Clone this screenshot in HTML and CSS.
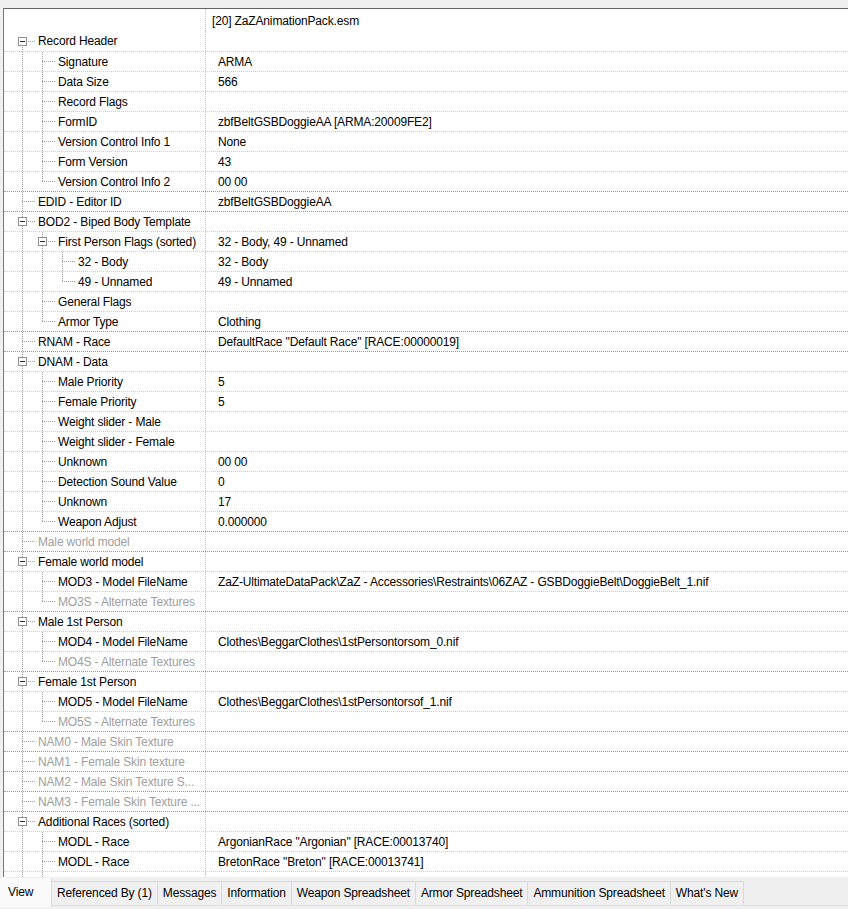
FILE: index.html
```html
<!DOCTYPE html>
<html>
<head>
<meta charset="utf-8">
<title>Record View</title>
<link rel="stylesheet" href="styles.css">
</head>
<body>
<div class="frame">
  <div class="head"><div class="name"></div><div class="val">[20] ZaZAnimationPack.esm</div></div>

  <div class="row first"><div class="name"><span class="g own start"><span class="box"></span></span><span class="label">Record Header</span></div><div class="val"></div></div>
  <div class="row"><div class="name"><span class="g pipe"></span><span class="g own tee"></span><span class="label">Signature</span></div><div class="val">ARMA</div></div>
  <div class="row"><div class="name"><span class="g pipe"></span><span class="g own tee"></span><span class="label">Data Size</span></div><div class="val">566</div></div>
  <div class="row"><div class="name"><span class="g pipe"></span><span class="g own tee"></span><span class="label">Record Flags</span></div><div class="val"></div></div>
  <div class="row"><div class="name"><span class="g pipe"></span><span class="g own tee"></span><span class="label">FormID</span></div><div class="val">zbfBeltGSBDoggieAA [ARMA:20009FE2]</div></div>
  <div class="row"><div class="name"><span class="g pipe"></span><span class="g own tee"></span><span class="label">Version Control Info 1</span></div><div class="val">None</div></div>
  <div class="row"><div class="name"><span class="g pipe"></span><span class="g own tee"></span><span class="label">Form Version</span></div><div class="val">43</div></div>
  <div class="row"><div class="name"><span class="g pipe"></span><span class="g own ell"></span><span class="label">Version Control Info 2</span></div><div class="val">00 00</div></div>

  <div class="row top"><div class="name"><span class="g own tee"></span><span class="label">EDID - Editor ID</span></div><div class="val">zbfBeltGSBDoggieAA</div></div>

  <div class="row top"><div class="name"><span class="g own tee"><span class="box"></span></span><span class="label">BOD2 - Biped Body Template</span></div><div class="val"></div></div>
  <div class="row"><div class="name"><span class="g pipe"></span><span class="g own tee"><span class="box"></span></span><span class="label">First Person Flags (sorted)</span></div><div class="val">32 - Body, 49 - Unnamed</div></div>
  <div class="row"><div class="name"><span class="g pipe"></span><span class="g pipe"></span><span class="g own tee"></span><span class="label">32 - Body</span></div><div class="val">32 - Body</div></div>
  <div class="row"><div class="name"><span class="g pipe"></span><span class="g pipe"></span><span class="g own ell"></span><span class="label">49 - Unnamed</span></div><div class="val">49 - Unnamed</div></div>
  <div class="row"><div class="name"><span class="g pipe"></span><span class="g own tee"></span><span class="label">General Flags</span></div><div class="val"></div></div>
  <div class="row"><div class="name"><span class="g pipe"></span><span class="g own ell"></span><span class="label">Armor Type</span></div><div class="val">Clothing</div></div>

  <div class="row top"><div class="name"><span class="g own tee"></span><span class="label">RNAM - Race</span></div><div class="val">DefaultRace "Default Race" [RACE:00000019]</div></div>

  <div class="row top"><div class="name"><span class="g own tee"><span class="box"></span></span><span class="label">DNAM - Data</span></div><div class="val"></div></div>
  <div class="row"><div class="name"><span class="g pipe"></span><span class="g own tee"></span><span class="label">Male Priority</span></div><div class="val">5</div></div>
  <div class="row"><div class="name"><span class="g pipe"></span><span class="g own tee"></span><span class="label">Female Priority</span></div><div class="val">5</div></div>
  <div class="row"><div class="name"><span class="g pipe"></span><span class="g own tee"></span><span class="label">Weight slider - Male</span></div><div class="val"></div></div>
  <div class="row"><div class="name"><span class="g pipe"></span><span class="g own tee"></span><span class="label">Weight slider - Female</span></div><div class="val"></div></div>
  <div class="row"><div class="name"><span class="g pipe"></span><span class="g own tee"></span><span class="label">Unknown</span></div><div class="val">00 00</div></div>
  <div class="row"><div class="name"><span class="g pipe"></span><span class="g own tee"></span><span class="label">Detection Sound Value</span></div><div class="val">0</div></div>
  <div class="row"><div class="name"><span class="g pipe"></span><span class="g own tee"></span><span class="label">Unknown</span></div><div class="val">17</div></div>
  <div class="row"><div class="name"><span class="g pipe"></span><span class="g own ell"></span><span class="label">Weapon Adjust</span></div><div class="val">0.000000</div></div>

  <div class="row top off"><div class="name"><span class="g own tee"></span><span class="label">Male world model</span></div><div class="val"></div></div>

  <div class="row top"><div class="name"><span class="g own tee"><span class="box"></span></span><span class="label">Female world model</span></div><div class="val"></div></div>
  <div class="row"><div class="name"><span class="g pipe"></span><span class="g own tee"></span><span class="label">MOD3 - Model FileName</span></div><div class="val">ZaZ-UltimateDataPack\ZaZ - Accessories\Restraints\06ZAZ - GSBDoggieBelt\DoggieBelt_1.nif</div></div>
  <div class="row off"><div class="name"><span class="g pipe"></span><span class="g own ell"></span><span class="label">MO3S - Alternate Textures</span></div><div class="val"></div></div>

  <div class="row top"><div class="name"><span class="g own tee"><span class="box"></span></span><span class="label">Male 1st Person</span></div><div class="val"></div></div>
  <div class="row"><div class="name"><span class="g pipe"></span><span class="g own tee"></span><span class="label">MOD4 - Model FileName</span></div><div class="val">Clothes\BeggarClothes\1stPersontorsom_0.nif</div></div>
  <div class="row off"><div class="name"><span class="g pipe"></span><span class="g own ell"></span><span class="label">MO4S - Alternate Textures</span></div><div class="val"></div></div>

  <div class="row top"><div class="name"><span class="g own tee"><span class="box"></span></span><span class="label">Female 1st Person</span></div><div class="val"></div></div>
  <div class="row"><div class="name"><span class="g pipe"></span><span class="g own tee"></span><span class="label">MOD5 - Model FileName</span></div><div class="val">Clothes\BeggarClothes\1stPersontorsof_1.nif</div></div>
  <div class="row off"><div class="name"><span class="g pipe"></span><span class="g own ell"></span><span class="label">MO5S - Alternate Textures</span></div><div class="val"></div></div>

  <div class="row top off"><div class="name"><span class="g own tee"></span><span class="label">NAM0 - Male Skin Texture</span></div><div class="val"></div></div>
  <div class="row top off"><div class="name"><span class="g own tee"></span><span class="label">NAM1 - Female Skin texture</span></div><div class="val"></div></div>
  <div class="row top off"><div class="name"><span class="g own tee"></span><span class="label">NAM2 - Male Skin Texture S...</span></div><div class="val"></div></div>
  <div class="row top off"><div class="name"><span class="g own tee"></span><span class="label">NAM3 - Female Skin Texture ...</span></div><div class="val"></div></div>

  <div class="row top"><div class="name"><span class="g own tee"><span class="box"></span></span><span class="label">Additional Races (sorted)</span></div><div class="val"></div></div>
  <div class="row"><div class="name"><span class="g pipe"></span><span class="g own tee"></span><span class="label">MODL - Race</span></div><div class="val">ArgonianRace "Argonian" [RACE:00013740]</div></div>
  <div class="row"><div class="name"><span class="g pipe"></span><span class="g own tee"></span><span class="label">MODL - Race</span></div><div class="val">BretonRace "Breton" [RACE:00013741]</div></div>
  <div class="row"><div class="name"><span class="g pipe"></span><span class="g own tee"></span><span class="label"></span></div><div class="val"></div></div>
</div>

<div class="tabbar">
  <div class="tabs">
    <div class="tab sel">View</div>
    <div class="tab">Referenced By (1)</div>
    <div class="tab">Messages</div>
    <div class="tab">Information</div>
    <div class="tab">Weapon Spreadsheet</div>
    <div class="tab">Armor Spreadsheet</div>
    <div class="tab">Ammunition Spreadsheet</div>
    <div class="tab">What's New</div>
  </div>
</div>
</body>
</html>
```
FILE: styles.css
```css
html, body {
  margin: 0;
  padding: 0;
}

body {
  width: 848px;
  height: 909px;
  overflow: hidden;
  background: #f0f0f0;
  font-family: "Liberation Sans", Arial, sans-serif;
  font-size: 12px;
  letter-spacing: -0.15px;
  color: #000;
}

/* tree view frame */
.frame {
  margin: 8px 0 0 3px;
  height: 869px;
  box-sizing: border-box;
  border-top: 1px solid #646464;
  border-left: 1px solid #7a7a7a;
  background: #fff;
  overflow: hidden;
}

.head {
  display: flex;
  height: 22px;
}

.name {
  flex: none;
  width: 202px;
  box-sizing: border-box;
  border-right: 1px dotted #c4c4c4;
  display: flex;
  padding-left: 8px;
  overflow: hidden;
}

.head .val {
  padding-left: 6px;
  line-height: 24px;
}

.row {
  display: flex;
  height: 20px;
  box-sizing: border-box;
  border-top: 1px dotted #cfcfcf;
}

.row.first {
  border-top: none;
}

.row.top {
  border-top-color: #9a9a9a;
}

.label {
  line-height: 21px;
  white-space: nowrap;
}

.val {
  padding-left: 12px;
  line-height: 21px;
  white-space: nowrap;
}

.off .label {
  color: #a0a0a0;
}

/* tree guide lines */
.g {
  flex: none;
  display: block;
  height: 100%;
}

.pipe {
  width: 20px;
  background: repeating-linear-gradient(to bottom, #a0a0a0 0 1px, transparent 1px 2px) 10px 0 / 1px 100% no-repeat;
}

.own {
  width: 26px;
}

.tee {
  background:
    repeating-linear-gradient(to right, #a0a0a0 0 1px, transparent 1px 2px) 10px 9px / 14px 1px no-repeat,
    repeating-linear-gradient(to bottom, #a0a0a0 0 1px, transparent 1px 2px) 10px 0 / 1px 100% no-repeat;
}

.ell {
  background:
    repeating-linear-gradient(to right, #a0a0a0 0 1px, transparent 1px 2px) 10px 9px / 14px 1px no-repeat,
    repeating-linear-gradient(to bottom, #a0a0a0 0 1px, transparent 1px 2px) 10px 0 / 1px 10px no-repeat;
}

.start {
  background:
    repeating-linear-gradient(to right, #a0a0a0 0 1px, transparent 1px 2px) 10px 10px / 14px 1px no-repeat,
    repeating-linear-gradient(to bottom, #a0a0a0 0 1px, transparent 1px 2px) 10px 10px / 1px 100% no-repeat;
}

/* expand / collapse box with minus sign */
.box {
  display: block;
  width: 9px;
  height: 9px;
  box-sizing: border-box;
  margin: 5px 0 0 6px;
  border: 1px solid #919191;
  background: linear-gradient(#2b2b2b, #2b2b2b) center / 5px 1px no-repeat, #fff;
}

.row.first .box {
  margin-top: 6px;
}

/* tabs along the bottom */
.tabbar {
  height: 32px;
}

.tabs {
  display: flex;
  height: 29px;
  box-sizing: border-box;
  padding-top: 4px;
  border-bottom: 1px solid #dedede;
}

.tab {
  flex: none;
  height: 24px;
  box-sizing: border-box;
  padding: 0 5px;
  line-height: 23px;
  border: 1px solid #d9d9d9;
  border-bottom: none;
  border-left: none;
  background: #f0f0f0;
  white-space: nowrap;
}

.tab.sel {
  width: 52px;
  height: 29px;
  margin-top: -3px;
  padding-left: 8px;
  padding-top: 3px;
  background: #fbfbfb;
  border-top: none;
}
```
